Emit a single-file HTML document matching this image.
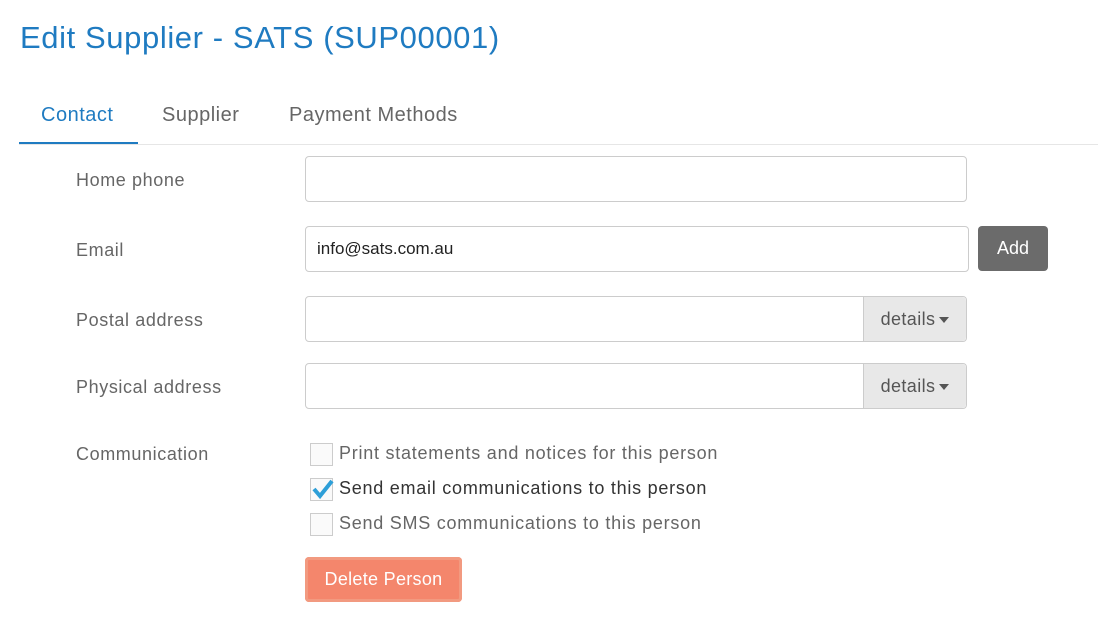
<!DOCTYPE html><html><head><style>
body{margin:0;width:1098px;height:632px;background:#fff;font-family:"Liberation Sans",sans-serif;position:relative;overflow:hidden}
.a{position:absolute}
h1{position:absolute;left:20px;top:20px;margin:0;font-weight:normal;font-size:31px;color:#1f7bc1;letter-spacing:0.6px}
.tab{position:absolute;top:104px;font-size:20px;color:#666;letter-spacing:0.5px}
.lbl{position:absolute;left:76px;font-size:18px;color:#666;letter-spacing:0.6px}
.in{position:absolute;left:305px;width:660px;height:44px;border:1px solid #ccc;border-radius:4px;background:#fff}
.det{position:absolute;right:0;top:0;width:102px;height:44px;background:#e8e8e8;border-left:1px solid #ccc;border-radius:0 4px 4px 0;font-size:18px;color:#555;line-height:44px;text-align:center;letter-spacing:0.4px}
.det i{display:inline-block;width:0;height:0;border-left:5px solid transparent;border-right:5px solid transparent;border-top:6px solid #555;vertical-align:middle;margin-left:4px}
.cb{position:absolute;left:310px;width:21px;height:21px;border:1px solid #ccc;background:#fafafa}
.ct{position:absolute;left:339px;font-size:18px;color:#666;letter-spacing:0.75px}
</style></head><body>
<h1>Edit Supplier - SATS (SUP00001)</h1>
<div class="tab" style="left:41px;color:#1f7bc1">Contact</div>
<div class="tab" style="left:162px">Supplier</div>
<div class="tab" style="left:289px">Payment Methods</div>
<div class="a" style="left:19px;top:144px;width:1079px;height:1px;background:#e6e6e6"></div>
<div class="a" style="left:19px;top:142px;width:119px;height:2px;background:#1f7bc1"></div>
<div class="lbl" style="top:170px">Home phone</div>
<div class="in" style="top:156px"></div>
<div class="lbl" style="top:240px">Email</div>
<div class="in" style="top:226px;width:662px"><span style="position:absolute;left:11px;top:12px;font-size:17px;color:#222">info@sats.com.au</span></div>
<div class="a" style="left:978px;top:226px;width:70px;height:45px;background:#6b6b6b;border-radius:4px;color:#fff;font-size:18px;line-height:45px;text-align:center">Add</div>
<div class="lbl" style="top:310px">Postal address</div>
<div class="in" style="top:296px"><div class="det">details<i></i></div></div>
<div class="lbl" style="top:377px">Physical address</div>
<div class="in" style="top:363px"><div class="det">details<i></i></div></div>
<div class="lbl" style="top:444px">Communication</div>
<div class="cb" style="top:443px"></div><div class="ct" style="top:443px">Print statements and notices for this person</div>
<div class="cb" style="top:478px"><svg width="24" height="24" style="position:absolute;left:1px;top:-3px"><path d="M2 13 L8 20 L20 5" stroke="#2e9fd8" stroke-width="4" fill="none"/></svg></div><div class="ct" style="top:478px;color:#333">Send email communications to this person</div>
<div class="cb" style="top:513px"></div><div class="ct" style="top:513px">Send SMS communications to this person</div>
<div class="a" style="left:305px;top:557px;width:157px;height:45px;background:#f4866c;border-radius:4px;box-shadow:inset 0 0 0 3px #f29a80;color:#fff;font-size:18px;line-height:45px;text-align:center;letter-spacing:0.3px">Delete Person</div>
</body></html>
